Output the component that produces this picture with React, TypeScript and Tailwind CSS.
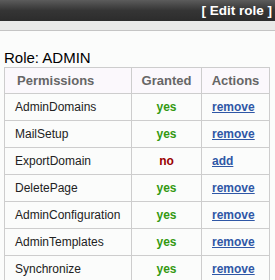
const rows: { name: string; granted: boolean }[] = [
  { name: "AdminDomains", granted: true },
  { name: "MailSetup", granted: true },
  { name: "ExportDomain", granted: false },
  { name: "DeletePage", granted: true },
  { name: "AdminConfiguration", granted: true },
  { name: "AdminTemplates", granted: true },
  { name: "Synchronize", granted: true },
];

export default function App() {
  return (
    <div className="h-[280px] w-[275px] overflow-hidden bg-[#fbfcfb] font-['Liberation_Sans',Arial,sans-serif]">
      <div className="flex h-[21px] items-center justify-end bg-gradient-to-b from-[#5c5c5c] via-[#353535] to-[#2c2c2c] pr-[3px]">
        <span className="text-[13.5px] font-bold leading-none text-white">[ Edit role ]</span>
      </div>
      <div className="h-[10px] border-b border-[#c4c4c4] bg-[#e9eae8]" />

      <h2 className="mt-[18px] pl-1 text-[15px] leading-[17px] text-black">Role: ADMIN</h2>

      <table className="ml-1 mt-px w-[265px] table-fixed border-collapse text-[12px]">
        <colgroup>
          <col className="w-[127px]" />
          <col className="w-[70px]" />
          <col className="w-[68px]" />
        </colgroup>
        <thead>
          <tr className="h-[26px] bg-[#fbf8fc] text-[13px] font-bold text-[#666666]">
            <th className="border border-[#cdcdcd] pl-[12px] text-left font-bold">Permissions</th>
            <th className="border border-[#cdcdcd] text-center font-bold">Granted</th>
            <th className="border border-[#cdcdcd] text-center font-bold">Actions</th>
          </tr>
        </thead>
        <tbody>
          {rows.map((r) => (
            <tr key={r.name} className="h-[27px]">
              <td className="border border-[#cdcdcd] pl-[10px] text-[#222222]">{r.name}</td>
              <td
                className={
                  r.granted
                    ? "border border-[#cdcdcd] text-center font-bold text-[#339911]"
                    : "border border-[#cdcdcd] text-center font-bold text-[#990000]"
                }
              >
                {r.granted ? "yes" : "no"}
              </td>
              <td className="border border-[#cdcdcd] pl-[10px]">
                <a href="#" className="font-bold text-[#2f57a6] underline">
                  {r.granted ? "remove" : "add"}
                </a>
              </td>
            </tr>
          ))}
        </tbody>
      </table>
    </div>
  );
}
